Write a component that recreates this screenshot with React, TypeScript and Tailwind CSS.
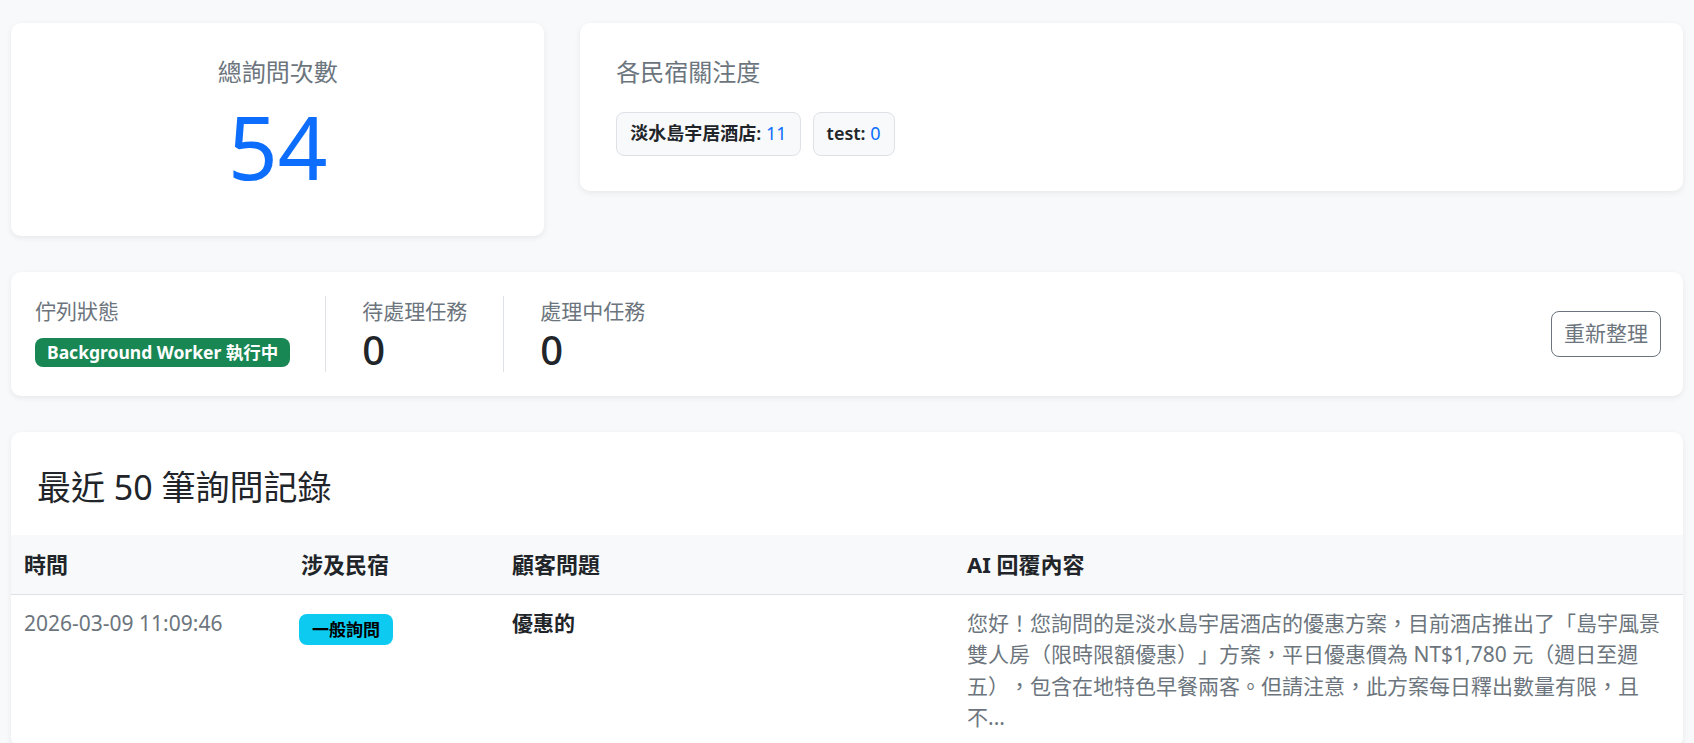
import React from "react";

interface LogRow {
  time: string;
  hotel: string;
  question: string;
  answer: string;
}

const attention = [
  { name: "淡水島宇居酒店", count: 11 },
  { name: "test", count: 0 },
];

const rows: LogRow[] = [
  {
    time: "2026-03-09 11:09:46",
    hotel: "一般詢問",
    question: "優惠的",
    answer:
      "您好！您詢問的是淡水島宇居酒店的優惠方案，目前酒店推出了「島宇風景雙人房（限時限額優惠）」方案，平日優惠價為 NT$1,780 元（週日至週五），包含在地特色早餐兩客。但請注意，此方案每日釋出數量有限，且不...",
  },
];

const font = {
  fontFamily: '"Noto Sans", "Noto Sans CJK TC", sans-serif',
};

export default function App() {
  return (
    <div
      style={font}
      className="min-h-screen bg-[#f8f9fa] px-[11px] pt-[23px] text-[21px] leading-[1.5] text-[#212529] [text-spacing-trim:space-all]"
    >
      {/* Top stats */}
      <div className="grid grid-cols-3 items-start gap-[36px]">
        <div className="rounded-[10px] bg-white px-[36px] pt-[35px] pb-[42px] text-center shadow-[0_2px_6px_rgba(0,0,0,0.07)]">
          <div className="text-[24px] leading-[1.2] text-[#6c757d]">總詢問次數</div>
          <div className="mt-[12px] text-[87px] leading-[1.1] text-[#0d6efd]">54</div>
        </div>

        <div className="col-span-2 rounded-[10px] bg-white px-[36px] py-[35px] shadow-[0_2px_6px_rgba(0,0,0,0.07)]">
          <div className="text-[24px] leading-[1.2] text-[#6c757d]">各民宿關注度</div>
          <div className="mt-[25px] flex gap-[12px]">
            {attention.map((a) => (
              <span
                key={a.name}
                className="rounded-[8px] border border-[#dee2e6] bg-[#f8f9fa] px-[13px] py-[7.5px] text-[18px] leading-[1.5]"
              >
                <span className="font-semibold">{a.name}:</span>{" "}
                <span className="text-[#0d6efd]">{a.count}</span>
              </span>
            ))}
          </div>
        </div>
      </div>

      {/* Queue status */}
      <div className="mt-[36px] flex items-center justify-between rounded-[10px] bg-white p-[24px] pr-[22px] shadow-[0_2px_6px_rgba(0,0,0,0.07)]">
        <div className="flex">
          <div className="border-r border-[#dee2e6] pr-[35px]">
            <div className="text-[#6c757d]">佇列狀態</div>
            <span className="mt-[10px] mb-[4px] inline-block rounded-[8px] bg-[#198754] px-[12px] py-[6px] text-[17.5px] font-bold leading-none text-white">
              Background Worker 執行中
            </span>
          </div>
          <div className="border-r border-[#dee2e6] px-[36px]">
            <div className="text-[#6c757d]">待處理任務</div>
            <div className="text-[40px] font-medium leading-[1.1]">0</div>
          </div>
          <div className="px-[36px]">
            <div className="text-[#6c757d]">處理中任務</div>
            <div className="text-[40px] font-medium leading-[1.1]">0</div>
          </div>
        </div>
        <button className="rounded-[8px] border border-[#6c757d] px-[12px] py-[6px] text-[21px] leading-[1.5] text-[#6c757d]">
          重新整理
        </button>
      </div>

      {/* Recent logs */}
      <div className="mt-[36px] overflow-hidden rounded-[10px] bg-white shadow-[0_2px_6px_rgba(0,0,0,0.07)]">
        <h3 className="px-[26px] pt-[35px] pb-[27px] text-[34px] font-normal leading-[1.2]">
          最近 50 筆詢問記錄
        </h3>
        <table className="w-full table-fixed text-left">
          <colgroup>
            <col className="w-[277px]" />
            <col className="w-[211px]" />
            <col className="w-[455px]" />
            <col />
          </colgroup>
          <thead>
            <tr className="border-b border-[#dee2e6] bg-[#f8f9fa]">
              <th className="px-[13px] py-[13px] text-[22px] font-bold">時間</th>
              <th className="px-[13px] py-[13px] text-[22px] font-bold">涉及民宿</th>
              <th className="px-[13px] py-[13px] text-[22px] font-bold">顧客問題</th>
              <th className="px-[13px] py-[13px] text-[22px] font-bold">AI 回覆內容</th>
            </tr>
          </thead>
          <tbody>
            {rows.map((r) => (
              <tr key={r.time} className="align-top">
                <td className="px-[13px] py-[13px] text-[#6c757d]">{r.time}</td>
                <td className="px-[11px] py-[13px]">
                  <span className="mt-[6px] inline-block rounded-[8px] bg-[#0dcaf0] px-[13px] py-[7px] text-[17px] font-bold leading-none text-black">
                    {r.hotel}
                  </span>
                </td>
                <td className="px-[13px] py-[13px] font-bold">{r.question}</td>
                <td className="px-[13px] py-[13px] text-[#6c757d]">{r.answer}</td>
              </tr>
            ))}
          </tbody>
        </table>
      </div>
    </div>
  );
}
